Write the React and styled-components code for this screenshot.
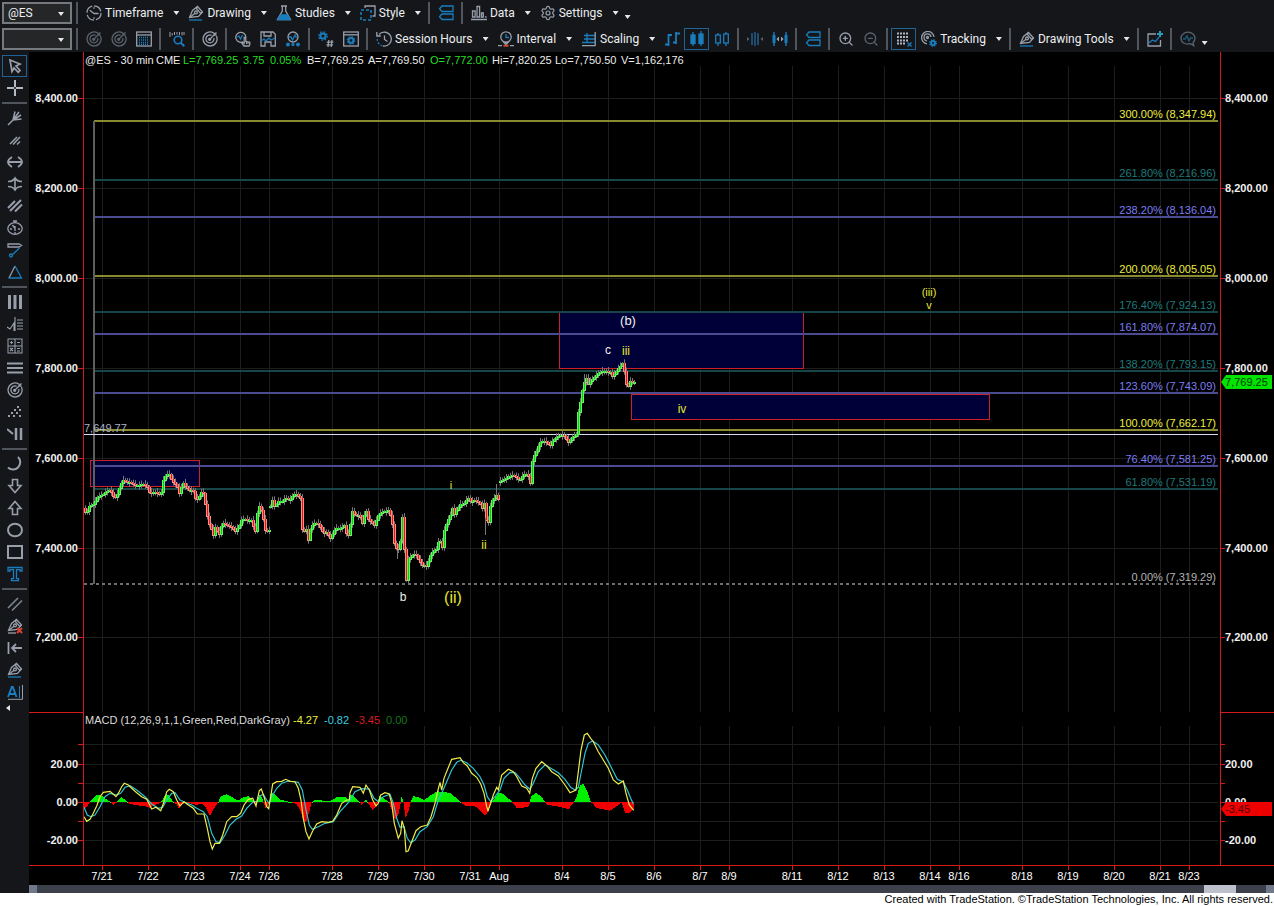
import { Settings, ZoomIn, ZoomOut } from "lucide-react";
import styled, { createGlobalStyle } from "styled-components";

const gray = "#989fab";
const dim = "#5c626c";
const blue = "#1a7dbd";
const red = "#d41a1a";

//all small drawings live on a 16x16 grid
const Svg = ({ children, color = gray }) => (
  <svg
    width="16"
    height="16"
    viewBox="0 0 16 16"
    fill="none"
    stroke={color}
    strokeWidth="1.3"
    aria-hidden="true"
  >
    {children}
  </svg>
);

const Target = ({ color = gray }) => (
  <Svg color={color}>
    <path d="M11.5 1.9A7 7 0 1 0 14.4 5" />
    <path d="M9.6 4.3A4 4 0 1 0 11.8 7" />
    <path d="M7.5 8.5L14.5 1.5M12 1.5v2.6h2.7" />
    <circle cx="7.7" cy="8.3" r="1" fill={color} />
  </Svg>
);

const Nib = ({ underline = true, cross }) => (
  <Svg>
    <path d="M1.5 12.5L4.5 5.5 9.5 1.5 14.5 7 10.5 11.5z" />
    <path d="M9.5 1.5l-1 2.2 4 4.4 2-1M2 12.2L7 8.2" />
    <circle cx="8" cy="7.4" r="1.4" />
    {underline && <path d="M1 15h13" stroke={blue} />}
    {cross && <path d="M1 15h8" />}
    {cross && <path d="M10 10l5 5M15 10l-5 5" stroke="#e04030" strokeWidth="2" />}
  </Svg>
);

const icons = {
  clock: (
    <Svg>
      <circle cx="8" cy="8" r="7" strokeDasharray="9 2" />
      <path d="M3.8 5.2L8 8.5h4.5" />
      <path d="M8 2v2M8 12v2" strokeWidth="1" />
    </Svg>
  ),
  nib: <Nib />,
  nibCross: <Nib underline={false} cross />,
  flask: (
    <Svg>
      <path d="M5 1h6M6.3 1v5L1.5 14.5h13L9.7 6V1" />
      <path d="M4.5 10h7l2.5 4.5H2z" fill={blue} stroke={blue} />
    </Svg>
  ),
  style: (
    <Svg>
      <path d="M5 3V1h10v10h-2.5" />
      <rect x="1" y="5" width="10" height="10" stroke={blue} strokeDasharray="3 2" strokeWidth="1.6" />
    </Svg>
  ),
  tags: (
    <Svg color={blue}>
      <path d="M15 1H4L1.5 3.8 4 6.5H15zM15 9H4L1.5 11.8 4 14.5H15z" />
    </Svg>
  ),
  bars: (
    <Svg>
      <path d="M1.5 12V6h2.6v6zM6 12V1.5h2.6V12zM10.5 12V8h1.8v4zM0 14.5h16M14 12h1.6" />
    </Svg>
  ),
  gear: <Settings size={16} color={gray} strokeWidth={1.8} />,
  target: <Target />,
  targetDim: <Target color={dim} />,
  table: (
    <Svg>
      <rect x="0.7" y="1" width="14.6" height="14" />
      <path d="M1 4h14" />
      <path d="M3 6.5h10M3 9h10M3 11.5h10M3 13.5h10" stroke={blue} strokeDasharray="1 1" />
    </Svg>
  ),
  find: (
    <Svg>
      <path d="M1 1v5M3.2 2v2.5M5.5 1v3M8 1v2.5M10.5 1v3M13 1v3.5M15 1v3" strokeWidth="1" />
      <circle cx="9" cy="9" r="3.8" stroke={blue} strokeWidth="1.6" />
      <path d="M11.8 11.8L15.3 15.3" stroke={blue} strokeWidth="2" />
    </Svg>
  ),
  hand: (
    <Svg>
      <path d="M8 10.8A5 5 0 1 1 10.8 6" />
      <path d="M2 6l2-1 1.5 3 2-4" stroke={blue} />
      <path d="M9 15l-2.2-3 1-.8 1.4 1V6.5h1.6v4l4 .8v2.2L14 15z" fill="#14161a" />
      <path d="M11.5 11v2M13 11v2" strokeWidth="1" />
    </Svg>
  ),
  save: (
    <Svg>
      <path d="M1 1h12l2.3 2.3V15H11V11H5v4H1z" />
      <path d="M4 1v4h7V1" />
      <path d="M1 10l3-2 2 2 3-3 2 2 4-2" stroke={blue} />
    </Svg>
  ),
  people: (
    <Svg>
      <circle cx="8" cy="6" r="5" />
      <path d="M4 6l2 0 1.5 3L10 4l1.5 3" stroke={blue} />
      <circle cx="3" cy="13.5" r="1.3" fill={blue} stroke={blue} />
      <circle cx="8" cy="13.5" r="1" stroke={blue} />
      <circle cx="13" cy="13.5" r="1.3" fill={blue} stroke={blue} />
    </Svg>
  ),
  gearHash: (
    <Svg>
      <circle cx="5" cy="5" r="2.6" stroke={blue} strokeWidth="2" />
      <circle cx="5" cy="5" r="4.2" stroke={blue} strokeDasharray="1.6 1.7" />
      <path d="M10.8 9l-.8 7M14 9l-.8 7M8.8 11.2h6.6M8.4 13.8H15" />
    </Svg>
  ),
  gearWindow: (
    <Svg>
      <rect x="0.7" y="1" width="14.6" height="14" />
      <path d="M1 3.8h14" />
      <circle cx="8" cy="9.4" r="2.4" stroke={blue} strokeWidth="2" />
      <circle cx="8" cy="9.4" r="3.7" stroke={blue} strokeDasharray="1.4 1.5" />
    </Svg>
  ),
  history: (
    <Svg>
      <path d="M3 3.5A7 7 0 1 1 7 15" />
      <path d="M.8 1v4h4M8.5 4.5v4l3 2" />
      <path d="M1.2 8a7 7 0 0 0 5.8 7" stroke={blue} strokeDasharray="2 1.5" />
    </Svg>
  ),
  interval: (
    <Svg>
      <circle cx="8" cy="6" r="5.2" />
      <path d="M8 3v3.5h3" stroke={blue} />
      <path d="M6 11.5h4L8 13.5z" fill={gray} />
      <path d="M0 14.7h4M12 14.7h4" />
      <path d="M5.5 14.7h5" stroke="#d04a30" strokeWidth="2" />
    </Svg>
  ),
  scaling: (
    <Svg color={blue}>
      <path d="M3 4.5h11M3 8h11M1 11.5h13M6 2v10" />
      <path d="M14.2 1v14M1 14.7h13.5" stroke={gray} />
    </Svg>
  ),
  ohlc: (
    <Svg color={blue}>
      <path d="M4.5 3v12M1 13.5h3.5M4.5 4H8M12 1v12M9 11.5h3M12 2.5h4" strokeWidth="1.8" />
    </Svg>
  ),
  candles: (
    <Svg color={blue}>
      <path d="M4 1v14M12 0v15" />
      <rect x="2" y="4" width="4" height="8.5" fill={blue} />
      <rect x="10" y="3" width="4" height="9.5" fill={blue} />
    </Svg>
  ),
  hollowCandles: (
    <Svg color={blue}>
      <path d="M4 2v2M4 12v3M12 1v2M12 12v3" />
      <rect x="1.7" y="4" width="4.6" height="8" />
      <rect x="9.7" y="3" width="4.6" height="9" />
    </Svg>
  ),
  narrow: (
    <Svg color="#20527a">
      <path d="M5 2v12M8 1v14M11 2v12" strokeWidth="1.8" />
      <path d="M0 6l2.5 2L0 10zM16 6l-2.5 2 2.5 2z" fill={dim} stroke="none" />
    </Svg>
  ),
  widen: (
    <Svg color={blue}>
      <path d="M2 1v14M14 1v14" strokeWidth="1.4" />
      <path d="M2 4v8M14 4v8" strokeWidth="3" />
      <path d="M7 5.5L4.4 8 7 10.5zM9 5.5L11.6 8 9 10.5z" fill={gray} stroke="none" />
    </Svg>
  ),
  zoomIn: <ZoomIn size={16} color={gray} strokeWidth={2} />,
  zoomOut: <ZoomOut size={16} color={dim} strokeWidth={2} />,
  grid: (
    <Svg color="#aeb5c0">
      <path d="M1 2.5h12M1 6h12M1 9.5h12M1 12.5h9" strokeDasharray="2 1" strokeWidth="2.2" />
      <path d="M11.5 11.5l4 4M15.5 11.5l-4 4" stroke={blue} />
    </Svg>
  ),
  tracking: (
    <Svg>
      <path d="M13 6A6.2 6.2 0 1 0 6 12.8" />
      <path d="M10 6A3.5 3.5 0 1 0 6 9.8" />
      <circle cx="6.5" cy="6.5" r="1" />
      <circle cx="12" cy="12" r="2" stroke={blue} strokeWidth="2" />
      <circle cx="12" cy="12" r="3.3" stroke={blue} strokeDasharray="1.2 1.4" />
    </Svg>
  ),
  addChart: (
    <Svg>
      <path d="M9 3H1v12h12.5V9" />
      <path d="M2 12l3.5-3 3 1.5L12 6" stroke={blue} />
      <path d="M13 0v6M10 3h6" stroke="#2a9ab8" strokeWidth="2" />
    </Svg>
  ),
  pulse: (
    <Svg color={dim}>
      <path d="M8 1.2c4 0 7 2.6 7 6 0 2-.8 3.4-2 4.5l.8 3-3.3-2C5 14 1 11.5 1 7.2c0-3.4 3-6 7-6z" />
      <path d="M3 8h2l2-3 2 5 1.5-3H13" stroke="#1d5f80" />
    </Svg>
  ),
  pointer: (
    <Svg>
      <path d="M3 2l10 4-4 2 4 4.5-1.8 1.8L7 10l-2 3.5z" strokeWidth="1.7" />
    </Svg>
  ),
  cross: (
    <Svg color="#b4bac4">
      <path d="M8 0v16M0 8h16" strokeWidth="2" />
      <circle cx="8" cy="8" r="1" fill="#14161a" stroke="none" />
    </Svg>
  ),
  fan: (
    <Svg>
      <path d="M1 15L6 10M6 10L8 1.5M6 10l6-8M6 10l8-5M6 10l8.5-1" strokeWidth="1.5" />
    </Svg>
  ),
  shortLines: (
    <Svg>
      <path d="M3 12l7-7M6 12.5l7-7.5M10 12.5l3-3" strokeWidth="1.5" />
    </Svg>
  ),
  horizontal: (
    <Svg>
      <path d="M1 8h14M5 3Q1 5.5 1 8Q1 10.5 5 13M11 3Q15 5.5 15 8Q15 10.5 11 13" strokeWidth="1.8" />
    </Svg>
  ),
  vertical: (
    <Svg>
      <path d="M8 2v12M1 5.5Q6 5.5 8 2Q10 5.5 15 5.5M1 10.5Q6 10.5 8 14Q10 10.5 15 10.5" strokeWidth="1.6" />
    </Svg>
  ),
  parallels: (
    <Svg>
      <path d="M1 10l7-7M3 13l11-11M8 13.5l7-7" strokeWidth="2" />
    </Svg>
  ),
  gauge: (
    <Svg>
      <ellipse cx="8" cy="8.5" rx="7.2" ry="5.8" />
      <path d="M6 1h4M8 1v2M8 8.5L5.5 5M8 6v5M3 9h2M11 9h2M8 12v2" />
    </Svg>
  ),
  ray: (
    <Svg>
      <path d="M1 2h11l2.5 1.5L12 5H1z" />
      <path d="M12.5 6L5 13" stroke={blue} />
      <circle cx="4" cy="13.5" r="1.5" stroke={blue} />
    </Svg>
  ),
  triangle: (
    <Svg>
      <path d="M8 2L2 14" />
      <path d="M8 2l6.5 12H1.5" stroke={blue} />
    </Svg>
  ),
  columns: (
    <Svg>
      <path d="M2.5 1v14M8 1v14M13.5 1v14" strokeWidth="3" />
    </Svg>
  ),
  waveList: (
    <Svg>
      <path d="M0 11l3 2 4-6v8M8 1v14M10 4h6M10 7h6M10 10h6M10 13h6" strokeWidth="1.1" />
    </Svg>
  ),
  calculator: (
    <Svg>
      <rect x="1" y="1" width="14" height="14" strokeWidth="1" />
      <path d="M8 1v14M1 8h14M3 4.5h3M4.5 3v3M10 4.5h3M3 10l3 3M6 10l-3 3M10 10.5h3M10 13h3" strokeWidth="1.1" />
    </Svg>
  ),
  rows: (
    <Svg>
      <path d="M0 3.5h16M0 8h16M0 12.5h16" strokeWidth="2" />
    </Svg>
  ),
  dots: (
    <Svg>
      <path d="M10 3h2M7 6h2M12 6h2M4 9h2M9 9h2M1 12h2M6 12h2M12 12h2" strokeWidth="2" />
    </Svg>
  ),
  slashBars: (
    <Svg>
      <path d="M0 3l6 5" strokeWidth="2" />
      <path d="M9 2v12M14 2v12" strokeWidth="2.5" />
    </Svg>
  ),
  arc: (
    <Svg>
      <path d="M11 1a7 7 0 1 1-10 10.5" strokeWidth="2" />
    </Svg>
  ),
  down: (
    <Svg>
      <path d="M5.5 1.5h5v6H14L8 14.5 2 7.5h3.5z" strokeWidth="1.6" />
    </Svg>
  ),
  up: (
    <Svg>
      <path d="M5.5 14.5h5v-6H14L8 1.5 2 8.5h3.5z" strokeWidth="1.6" />
    </Svg>
  ),
  ellipse: (
    <Svg>
      <ellipse cx="8" cy="8" rx="7" ry="6.2" strokeWidth="2" />
    </Svg>
  ),
  rect: (
    <Svg>
      <rect x="1" y="2" width="14" height="12" strokeWidth="2" />
    </Svg>
  ),
  text: (
    <Svg color={blue}>
      <path d="M1 1.5h14V5h-2V3.7H9.5v9h2v2h-7v-2h2v-9H3V5H1z" />
    </Svg>
  ),
  twoLines: (
    <Svg color="#7c828d">
      <path d="M1 12L11 2M5 14.5l10-10" strokeWidth="1.7" />
    </Svg>
  ),
  toLeft: (
    <Svg>
      <path d="M1.5 2v12M15 8H5M9 4L5 8l4 4" strokeWidth="1.8" />
    </Svg>
  ),
  letter: (
    <Svg color={blue}>
      <path d="M1 13L4.8 3h1L9.5 13M2.5 10H8" strokeWidth="1.9" />
      <path d="M12.5 2v12" strokeWidth="1" />
      <path d="M1 15.3h14.5V1" stroke={gray} strokeWidth="1" />
    </Svg>
  ),
};

const topTools = [
  { icon: "clock", label: "Timeframe" },
  { icon: "nib", label: "Drawing" },
  { icon: "flask", label: "Studies" },
  { icon: "style", label: "Style" },
  "|",
  { icon: "tags", name: "Link" },
  "|",
  { icon: "bars", label: "Data" },
  { icon: "gear", label: "Settings" },
];

const chartTools = [
  { icon: "targetDim", name: "Target back" },
  { icon: "targetDim", name: "Target forward" },
  { icon: "table", name: "Data window" },
  "|",
  { icon: "find", name: "Find" },
  "|",
  { icon: "target", name: "Target" },
  "|",
  { icon: "hand", name: "Pick" },
  { icon: "save", name: "Save" },
  { icon: "people", name: "Share" },
  "|",
  { icon: "gearHash", name: "Number format" },
  { icon: "gearWindow", name: "Window options" },
  "|",
  { icon: "history", label: "Session Hours" },
  { icon: "interval", label: "Interval" },
  { icon: "scaling", label: "Scaling" },
  { icon: "ohlc", name: "Bars" },
  { icon: "candles", name: "Candles", active: true },
  { icon: "hollowCandles", name: "Hollow candles" },
  "|",
  { icon: "narrow", name: "Decrease spacing" },
  { icon: "widen", name: "Increase spacing" },
  "|",
  { icon: "tags", name: "Link" },
  "|",
  { icon: "zoomIn", name: "Zoom in" },
  { icon: "zoomOut", name: "Zoom out" },
  "|",
  { icon: "grid", name: "Grid", active: true },
  { icon: "tracking", label: "Tracking" },
  "|",
  { icon: "nib", label: "Drawing Tools" },
  "|",
  { icon: "addChart", name: "Add chart" },
  "|",
  { icon: "pulse", name: "Comment" },
];

const sideTools = [
  "pointer", "cross", "|",
  "fan", "shortLines", "horizontal", "vertical", "parallels", "gauge", "ray", "triangle", "|",
  "columns", "waveList", "calculator", "rows", "target", "dots", "slashBars", "|",
  "arc", "down", "up", "ellipse", "rect", "text", "|",
  "twoLines", "nibCross", "toLeft", "nib", "letter",
];

const dates = [
  ["7/21", 102], ["7/22", 148], ["7/23", 194], ["7/24", 240], ["7/26", 269],
  ["7/28", 332], ["7/29", 378], ["7/30", 424], ["7/31", 470], ["Aug", 499],
  ["8/4", 562], ["8/5", 608], ["8/6", 654], ["8/7", 700], ["8/9", 729],
  ["8/11", 792], ["8/12", 838], ["8/13", 884], ["8/14", 930], ["8/16", 959],
  ["8/18", 1022], ["8/19", 1068], ["8/20", 1114], ["8/21", 1160], ["8/23", 1189],
];

const prices = [
  ["8,400.00", 98], ["8,200.00", 188], ["8,000.00", 278], ["7,800.00", 368],
  ["7,600.00", 458], ["7,400.00", 548], ["7,200.00", 637],
];

const macdLevels = [
  ["", 744], ["20.00", 764], ["", 783], ["0.00", 802], ["", 821], ["-20.00", 840],
];

const yellow = { line: "#8a8a30", text: "#eeee3c" };
const purple = { line: "#4b4b92", text: "#7d7df0" };
const teal = { line: "#164648", text: "#1f7a7a" };

const fibs = [
  ["300.00% (8,347.94)", 121, yellow],
  ["261.80% (8,216.96)", 180, teal],
  ["238.20% (8,136.04)", 217, purple],
  ["200.00% (8,005.05)", 276, yellow],
  ["176.40% (7,924.13)", 312, teal],
  ["161.80% (7,874.07)", 334, purple],
  ["138.20% (7,793.15)", 371, teal],
  ["123.60% (7,743.09)", 393, purple],
  ["100.00% (7,662.17)", 430, yellow],
  ["76.40% (7,581.25)", 466, purple],
  ["61.80% (7,531.19)", 489, teal],
];

const quote = [
  ["@ES - 30 min", 85, "#ececec"],
  ["CME", 156, "#ececec"],
  ["L=7,769.25", 183, "#28dc28"],
  ["3.75", 243, "#28dc28"],
  ["0.05%", 270, "#28dc28"],
  ["B=7,769.25", 307, "#ececec"],
  ["A=7,769.50", 368, "#ececec"],
  ["O=7,772.00", 430, "#28dc28"],
  ["Hi=7,820.25", 492, "#ececec"],
  ["Lo=7,750.50", 555, "#ececec"],
  ["V=1,162,176", 621, "#ececec"],
];

const macdInfo = [
  ["MACD (12,26,9,1,1,Green,Red,DarkGray)", 85, "#dcdcdc"],
  ["-4.27", 293, "#eeee3c"],
  ["-0.82", 324, "#3ccfe0"],
  ["-3.45", 355, "#d81c24"],
  ["0.00", 386, "#147a1c"],
];

const waves = [
  ["(b)", 628, 325, 13, "#f0f0f0"],
  ["c", 608, 354, 12, "#f0f0f0"],
  ["iii", 626, 355, 12, "#e6e630"],
  ["(iii)", 929, 296, 11, "#e6e630"],
  ["v", 929, 309, 11, "#e6e630"],
  ["iv", 682, 413, 12, "#e6e630"],
  ["i", 451, 489, 11, "#e6e630"],
  ["ii", 484, 549, 12, "#e6e630"],
  ["b", 403, 601, 12, "#f0f0f0"],
  ["(ii)", 453, 603, 16, "#e6e630"],
];

//series are stored at three units to the pixel from the given origin
const series = (ox, oy, values) => {
  const points = [];
  for (let i = 0; i < values.length; i += 2) {
    points.push([ox + values[i] / 3, oy + values[i + 1] / 3]);
  }
  return points;
};

const priceRuns = [
  series(80, 400, [
    12, 325, 18, 345, 25, 325, 40, 315, 50, 290, 62, 280, 75, 278, 90, 275, 98, 290, 108, 290,
    115, 265, 122, 245, 128, 240, 140, 250, 160, 252, 185, 250, 200, 265, 210, 285, 220, 272,
    235, 275, 241, 290, 248, 245, 258, 228, 268, 225, 275, 240, 283, 245, 290, 255, 298, 282,
    306, 250, 315, 262, 325, 270, 338, 265, 345, 290, 352, 295, 362, 280, 370, 285, 378, 335,
    385, 370, 392, 375, 397, 418, 402, 372, 410, 390, 418, 405, 425, 372, 440, 375, 455, 375,
    463, 392, 475, 382, 485, 362, 500, 358, 515, 355, 524, 400, 532, 335, 538, 320, 546, 345,
    556, 395, 567, 384,
  ]),
  [
    ...series(80, 400, [
      568, 320, 575, 295, 583, 320, 595, 308, 605, 305, 618, 290, 628, 295, 640, 282, 655, 292,
      662, 300, 665, 385, 670, 400, 676, 370, 684, 415, 690, 385, 700, 370, 715, 378, 730, 395,
      738, 390, 750, 412, 765, 390, 780, 385, 793, 370, 802, 415, 810, 372,
    ]),
    ...series(350, 300, [
      5, 635, 15, 650, 28, 645, 38, 670, 45, 618, 55, 660, 72, 680, 85, 640, 100, 630, 115, 632,
      125, 665, 130, 730, 142, 752, 150, 720, 156, 645, 160, 650, 163, 790, 168, 840, 174, 780,
      185, 770, 195, 760, 205, 775, 215, 790, 230, 800, 240, 770, 255, 745, 262, 740, 267, 692,
      272, 735, 277, 740, 280, 695, 290, 670, 300, 650, 305, 622, 312, 640, 320, 620, 330, 608,
      340, 615, 352, 598, 362, 608, 375, 595, 388, 605, 398, 630, 403, 610, 408, 665, 415, 670,
      420, 620, 428, 590, 436, 590, 440, 572, 446, 605,
    ]),
  ],
  series(350, 300, [
    448, 543, 462, 543, 475, 530, 488, 520, 500, 530, 508, 540, 520, 528, 532, 525, 540, 545,
    542, 490, 550, 465, 560, 445, 570, 430, 585, 428, 600, 430, 608, 413, 625, 410, 640, 410,
    655, 425, 665, 408, 678, 402, 682, 350, 690, 310, 695, 280, 700, 255, 707, 230, 715, 250,
    722, 235, 740, 228, 755, 215, 770, 210, 780, 212, 787, 228, 800, 215, 812, 200, 819, 180,
    822, 210, 827, 245, 832, 262, 838, 240, 851, 248,
  ]),
];

const macdLine = [
  ...series(0, 700, [
    252, 350, 260, 364, 270, 358, 280, 340, 290, 318, 300, 290, 310, 277, 330, 274, 348, 290,
    356, 278, 365, 260, 373, 250, 385, 255, 395, 265, 410, 278, 425, 290, 440, 298, 455, 327,
    468, 322, 482, 332, 492, 305, 500, 275, 508, 268, 520, 275, 530, 300, 540, 318, 552, 305,
    565, 315, 580, 325, 592, 342, 612, 342, 622, 385, 630, 425, 637, 447, 645, 430, 658, 430,
    668, 405, 680, 365, 695, 350, 710, 350, 722, 340, 732, 315, 745, 298, 758, 295, 768, 318,
    778, 272, 784, 267, 792, 290, 800, 320, 806, 326, 812, 290, 818, 252, 830, 245, 845, 244,
    857, 238, 870, 244, 885, 245, 895, 265, 903, 300, 910, 355, 918, 395, 927, 417, 937, 395,
    950, 372, 965, 365, 985, 367, 998, 364, 1010, 345, 1025, 310, 1040, 300, 1048, 300,
  ]),
  ...series(350, 700, [
    0, 278, 8, 260, 30, 262, 40, 280, 48, 255, 58, 270, 68, 300, 78, 318, 85, 310, 92, 285,
    105, 278, 118, 282, 125, 310, 133, 370, 145, 415, 152, 400, 156, 362, 163, 385, 168, 455,
    175, 452, 185, 425, 198, 392, 212, 380, 232, 375, 243, 350, 255, 310, 264, 270, 270, 247,
    275, 270, 282, 235, 292, 210, 305, 178, 330, 173, 340, 188, 352, 198, 365, 220, 380, 232,
    392, 252, 402, 280, 410, 320, 414, 332, 422, 310, 430, 285, 440, 262, 445, 270, 455, 225,
    475, 208, 490, 215, 500, 230, 515, 258, 530, 265, 539, 280, 547, 235, 558, 205, 575, 185,
    590, 197, 605, 215, 625, 228, 645, 255, 660, 278, 678, 270, 685, 215, 693, 150, 703, 105,
    712, 100, 722, 115, 730, 125, 745, 155, 760, 180, 775, 205, 790, 240, 805, 252, 820, 243,
    828, 280, 838, 315, 851, 331,
  ]),
];

const signalLine = [
  ...series(0, 700, [
    252, 322, 262, 345, 272, 350, 285, 345, 300, 320, 315, 290, 330, 280, 350, 285, 362, 280,
    375, 262, 390, 257, 410, 270, 435, 290, 455, 312, 475, 325, 488, 322, 500, 300, 515, 280,
    525, 278, 540, 300, 555, 307, 575, 315, 590, 325, 610, 335, 622, 350, 635, 400, 648, 425,
    660, 428, 675, 405, 690, 375, 708, 358, 725, 348, 740, 325, 760, 305, 770, 305, 780, 288,
    790, 283, 800, 300, 807, 310, 815, 290, 830, 265, 845, 250, 865, 243, 895, 247, 907, 270,
    918, 330, 928, 375, 937, 388, 955, 380, 975, 370, 1000, 365, 1020, 335, 1045, 308,
  ]),
  ...series(350, 700, [
    0, 300, 15, 275, 35, 266, 58, 267, 72, 295, 85, 305, 100, 290, 120, 283, 130, 310, 140, 355,
    150, 382, 162, 380, 172, 415, 182, 428, 195, 420, 210, 395, 232, 380, 250, 350, 265, 300,
    275, 280, 290, 245, 305, 210, 320, 187, 333, 181, 350, 188, 370, 205, 390, 230, 402, 255,
    412, 290, 422, 305, 435, 290, 450, 270, 462, 235, 480, 217, 495, 218, 510, 235, 525, 255,
    540, 268, 550, 250, 565, 215, 585, 195, 600, 203, 625, 218, 645, 238, 662, 262, 675, 270,
    685, 262, 695, 210, 705, 160, 715, 130, 728, 123, 745, 135, 765, 165, 785, 205, 802, 238,
    820, 246, 832, 270, 842, 295, 850, 312,
  ]),
];

const histogram = [
  ...series(0, 700, [
    252, 325, 258, 326, 268, 310, 275, 300, 290, 286, 305, 288, 320, 300, 332, 307, 340, 316,
    352, 305, 365, 293, 378, 303, 388, 312, 410, 317, 435, 320, 450, 325, 460, 318, 480, 310,
    488, 300, 498, 283, 508, 288, 518, 305, 530, 315, 537, 327, 545, 315, 560, 308, 590, 316,
    605, 312, 615, 320, 630, 348, 640, 330, 655, 308, 662, 290, 680, 284, 700, 295, 715, 303,
    730, 292, 745, 290, 757, 300, 765, 318, 772, 298, 780, 284, 788, 300, 797, 327, 808, 310,
    812, 280, 825, 283, 840, 300, 860, 305, 880, 308, 890, 315, 900, 330, 910, 362, 918, 368,
    928, 335, 935, 308, 945, 300, 960, 302, 985, 305, 1000, 300, 1010, 291, 1035, 291, 1045, 300,
  ]),
  ...series(350, 700, [
    0, 285, 8, 285, 20, 300, 30, 308, 35, 318, 42, 308, 48, 298, 55, 312, 68, 332, 80, 318,
    88, 290, 100, 296, 115, 305, 125, 330, 135, 360, 145, 345, 152, 310, 155, 290, 160, 308,
    167, 355, 175, 335, 182, 308, 190, 290, 205, 292, 222, 302, 240, 288, 262, 275, 285, 278,
    300, 280, 320, 296, 333, 308, 345, 318, 375, 320, 390, 332, 405, 348, 415, 335, 424, 308,
    435, 295, 445, 280, 455, 280, 470, 292, 485, 305, 500, 325, 518, 325, 537, 320, 543, 290,
    558, 280, 575, 292, 590, 315, 620, 320, 655, 328, 670, 310, 680, 290, 690, 258, 700, 252,
    712, 275, 722, 305, 740, 325, 780, 333, 800, 320, 815, 308, 825, 340, 838, 342, 851, 328,
  ]),
];

const toPath = (points) => "M" + points.map(([x, y]) => `${x.toFixed(1)} ${y.toFixed(1)}`).join("L");

const valueAt = (points, x) => {
  const i = points.findIndex((p) => p[0] >= x);
  if (i <= 0) return points[i < 0 ? points.length - 1 : 0][1];
  const [x0, y0] = points[i - 1];
  const [x1, y1] = points[i];
  return y0 + ((y1 - y0) * (x - x0)) / (x1 - x0 || 1);
};

//one candle every two pixels, opening where the one before it closed
const makeCandles = (points) => {
  const candles = [];
  const end = points[points.length - 1][0];
  let open = Math.round(points[0][1]);
  for (let x = Math.round(points[0][0]); x <= end; x += 2) {
    const wobble = Math.sin(x * 12.9) * 1.6;
    const close = Math.round(valueAt(points, x + 1) + wobble);
    const wick = 1 + Math.abs(Math.sin(x * 7.3)) * 3;
    candles.push({
      x,
      top: Math.min(open, close),
      size: Math.max(1, Math.abs(close - open)),
      rising: close <= open,
      wick,
    });
    open = close;
  }
  return candles;
};

const histogramBars = () => {
  const bars = [];
  for (let x = 84; x < 634; x++) {
    bars.push([x, valueAt(histogram, x + 0.5) - 802.4]);
  }
  return bars;
};

const ToolItem = ({ item }) => {
  if (item === "|") return <Divider />;
  return (
    <ToolButton type="button" $active={item.active} aria-label={item.name}>
      {icons[item.icon]}
      {item.label && (
        <>
          <ToolLabel>{item.label}</ToolLabel>
          <Caret />
        </>
      )}
    </ToolButton>
  );
};

const Picker = ({ name, options }) => (
  <PickerBox>
    <PickerSelect aria-label={name}>
      {options.map((o) => (
        <option key={o}>{o}</option>
      ))}
    </PickerSelect>
    <PickerCaret />
  </PickerBox>
);

const AxisLabels = ({ levels }) =>
  levels.map(([label, y]) => (
    <g key={y}>
      <AxisLine d={`M78 ${y + 0.5}h5M1221 ${y + 0.5}h4`} />
      <AxisText x="78" y={y + 4} textAnchor="end">
        {label}
      </AxisText>
      <AxisText x="1225" y={y + 4}>
        {label}
      </AxisText>
    </g>
  ));

const Zone = ({ x, y, width, height }) => (
  <rect x={x + 0.5} y={y + 0.5} width={width} height={height} fill="#000038" stroke="#cc2028" />
);

const Chart = () => (
  <ChartSvg viewBox="29 52 1245 833" role="img" aria-label="@ES 30 minute chart">
    <rect x="29" y="52" width="1245" height="833" fill="#000" />
    <g stroke="#1d1d1d">
      {dates.map(([label, x]) => (
        <path key={label} d={`M${x + 0.5} 66V712M${x + 0.5} 726V865`} />
      ))}
      {[...prices, ...macdLevels].map(([, y]) => (
        <path key={y} d={`M84 ${y + 0.5}H1218`} />
      ))}
    </g>

    <Zone x={90} y={460} width={109} height={26} />
    <Zone x={559} y={311} width={244} height={57} />
    <Zone x={631} y={394} width={358} height={25} />

    {fibs.map(([label, y, color]) => (
      <g key={label}>
        <path d={`M94 ${y}H1218`} stroke={color.line} strokeWidth="2" />
        <ChartText x="1216" y={y - 3} textAnchor="end" fill={color.text}>
          {label}
        </ChartText>
      </g>
    ))}
    <path d="M84 584H1218" stroke="#6e6e6e" strokeWidth="2" strokeDasharray="3 3" />
    <ChartText x="1216" y="581" textAnchor="end" fill="#b4b4b4">
      0.00% (7,319.29)
    </ChartText>
    <path d="M94 121V584" stroke="#5e5e5e" strokeWidth="2" />
    <path d="M84 434.5H1218" stroke="#d8d8f4" />
    <ChartText x="84" y="432" fill="#a9b4c8">
      7,649.77
    </ChartText>

    {priceRuns.flatMap(makeCandles).map((c) => (
      <g key={c.x}>
        <path d={`M${c.x + 1.5} ${c.top - c.wick}v${c.size + c.wick * 2}`} stroke="#777" />
        <rect x={c.x} y={c.top} width="3" height={c.size + 1} fill={c.rising ? "#6cf06c" : "#f49086"} />
        <rect x={c.x + 1} y={c.top} width="1" height={c.size} fill={c.rising ? "#00d800" : "#e81414"} />
      </g>
    ))}
    <path d="M485.5 518V535M397.5 550V559M496.5 484V492M584.5 374V384M588.5 374V384" stroke="#777" />

    {waves.map(([label, x, y, size, fill]) => (
      <ChartText key={label} x={x} y={y} $size={size} fill={fill} textAnchor="middle">
        {label}
      </ChartText>
    ))}

    {histogramBars().map(([x, h]) => (
      <rect
        key={x}
        x={x}
        y={h < 0 ? 802 + Math.round(h) : 802}
        width="1"
        height={Math.max(1, Math.abs(Math.round(h)))}
        fill={h < 0 ? "#00f000" : "#f00000"}
      />
    ))}
    <path d={toPath(signalLine)} fill="none" stroke="#2fc4d4" strokeWidth="1.2" />
    <path d={toPath(macdLine)} fill="none" stroke="#ecec4a" strokeWidth="1.2" />

    {[...quote].map(([label, x, fill]) => (
      <ChartText key={label} x={x} y="64" fill={fill}>
        {label}
      </ChartText>
    ))}
    {macdInfo.map(([label, x, fill]) => (
      <ChartText key={label} x={x} y="724" fill={fill}>
        {label}
      </ChartText>
    ))}

    <AxisLine d="M83.5 52V865.5M1220.5 52V865.5M29 712.5H83M1220 712.5H1274M29 865.5H1274" />
    <AxisLabels levels={prices} />
    <AxisLabels levels={macdLevels} />
    {dates.map(([label, x]) => (
      <g key={label}>
        <AxisLine d={`M${x + 0.5} 866v4`} />
        <AxisText x={x} y="880" textAnchor="middle" $light>
          {label}
        </AxisText>
      </g>
    ))}

    <path d="M1221 382l5-7H1272V389H1226z" fill="#00e400" />
    <ChartText x="1225" y="386" fill="#003800">
      7,769.25
    </ChartText>
    <path d="M1221 809l5-7H1272V816H1226z" fill="#ec0000" />
    <ChartText x="1225" y="813" fill="#500000">
      -3.45
    </ChartText>
  </ChartSvg>
);

const App = () => (
  <>
    <GlobalStyle />
    <Page>
      <Header>
        <Toolbar>
          <Picker name="Symbol" options={["@ES"]} />
          <Divider />
          {topTools.map((item, i) => (
            <ToolItem key={i} item={item} />
          ))}
          <MoreButton type="button" aria-label="More">
            <Caret />
          </MoreButton>
        </Toolbar>
        <Toolbar>
          <Picker name="Template" options={[""]} />
          <Divider />
          {chartTools.map((item, i) => (
            <ToolItem key={i} item={item} />
          ))}
          <MoreButton type="button" aria-label="More">
            <Caret />
          </MoreButton>
        </Toolbar>
      </Header>
      <Workspace>
        <Sidebar>
          {sideTools.map((name, i) =>
            name === "|" ? (
              <SideDivider key={i} />
            ) : (
              <SideButton key={i} type="button" $active={name === "pointer"} aria-label={name}>
                {icons[name]}
              </SideButton>
            )
          )}
          <CollapseButton type="button" aria-label="Collapse">
            <LeftCaret />
          </CollapseButton>
        </Sidebar>
        <ChartColumn>
          <Chart />
          <Scrollbar>
            <ScrollEnd />
            <ScrollTrack />
            <ScrollThumb />
            <ScrollGap />
            <ScrollEnd />
          </Scrollbar>
        </ChartColumn>
      </Workspace>
      <Footer>
        Created with TradeStation. ©TradeStation Technologies, Inc. All rights reserved.
      </Footer>
    </Page>
  </>
);

const GlobalStyle = createGlobalStyle`
  * {
    box-sizing: border-box;
  }
  body {
    margin: 0;
    background: #fff;
    font-family: "Liberation Sans", Arial, sans-serif;
  }
  button {
    border: 0;
    padding: 0;
    background: none;
    font: inherit;
    color: inherit;
  }
`;

const Page = styled.div`
  display: flex;
  flex-direction: column;
`;

const Header = styled.header`
  background: #14161a;
  color: #eceef0;
  font-family: Roboto, "Open Sans", sans-serif;
  font-size: 12px;
`;

const Toolbar = styled.div`
  display: flex;
  align-items: center;
  height: 26px;
  padding-left: 2px;
`;

const PickerBox = styled.div`
  position: relative;
  width: 70px;
  height: 22px;
  margin-right: 1px;
  flex-shrink: 0;
`;

const PickerSelect = styled.select`
  appearance: none;
  width: 100%;
  height: 100%;
  padding: 0 4px;
  border: 2px solid #76797e;
  border-radius: 0;
  background: #242628;
  color: inherit;
  font: inherit;
`;

const Caret = styled.span`
  width: 6px;
  height: 4px;
  background: #e4e6ea;
  clip-path: polygon(0 0, 100% 0, 50% 100%);
`;

const PickerCaret = styled(Caret)`
  position: absolute;
  right: 8px;
  top: 10px;
  pointer-events: none;
`;

const LeftCaret = styled.span`
  width: 4px;
  height: 6px;
  background: #e4e6ea;
  clip-path: polygon(100% 0, 100% 100%, 0 50%);
`;

const Divider = styled.span`
  width: 2px;
  height: 22px;
  margin: 0 3px;
  background: #50555e;
  flex-shrink: 0;
`;

const ToolButton = styled.button`
  display: flex;
  align-items: center;
  height: 22px;
  padding: 0 3px 0 4px;
  border: 1px solid ${(p) => (p.$active ? "#1d6396" : "transparent")};
  flex-shrink: 0;
  svg {
    display: block;
    flex-shrink: 0;
  }
`;

//gap after the text leaves room before the drop-down arrow
const ToolLabel = styled.span`
  margin: 0 10px 0 3px;
  white-space: nowrap;
`;

const MoreButton = styled.button`
  display: flex;
  align-items: flex-end;
  height: 12px;
  padding-left: 2px;
`;

const Workspace = styled.main`
  display: flex;
`;

const Sidebar = styled.nav`
  display: flex;
  flex-direction: column;
  width: 29px;
  padding: 3px 2px 0;
  background: #14161a;
  flex-shrink: 0;
`;

const SideButton = styled.button`
  display: flex;
  align-items: center;
  justify-content: center;
  height: 22px;
  border: 1px solid ${(p) => (p.$active ? "#1d6396" : "transparent")};
`;

const SideDivider = styled.span`
  height: 2px;
  margin: 3px 0;
  background: #50555e;
`;

const CollapseButton = styled.button`
  display: flex;
  padding: 2px 4px;
`;

const ChartColumn = styled.div`
  flex: 1;
  min-width: 0;
`;

const ChartSvg = styled.svg`
  display: block;
  width: 100%;
  height: auto;
`;

const ChartText = styled.text`
  font-size: ${(p) => p.$size || 11}px;
`;

const AxisText = styled.text`
  font-size: 11px;
  font-weight: ${(p) => (p.$light ? 400 : 700)};
  fill: ${(p) => (p.$light ? "#fff" : "#f0f0f0")};
`;

const AxisLine = styled.path`
  stroke: ${red};
`;

const Scrollbar = styled.div`
  display: flex;
  height: 8px;
`;

const ScrollEnd = styled.div`
  width: 8px;
  background: #70798a;
`;

const ScrollTrack = styled.div`
  flex: 1;
  background: #3c404a;
`;

const ScrollThumb = styled.div`
  width: 32px;
  background: #bcc0ca;
`;

const ScrollGap = styled.div`
  width: 30px;
  background: #3c404a;
`;

const Footer = styled.footer`
  height: 13px;
  padding-right: 1px;
  color: #000;
  font-size: 11px;
  line-height: 13px;
  text-align: right;
`;

export default App;
